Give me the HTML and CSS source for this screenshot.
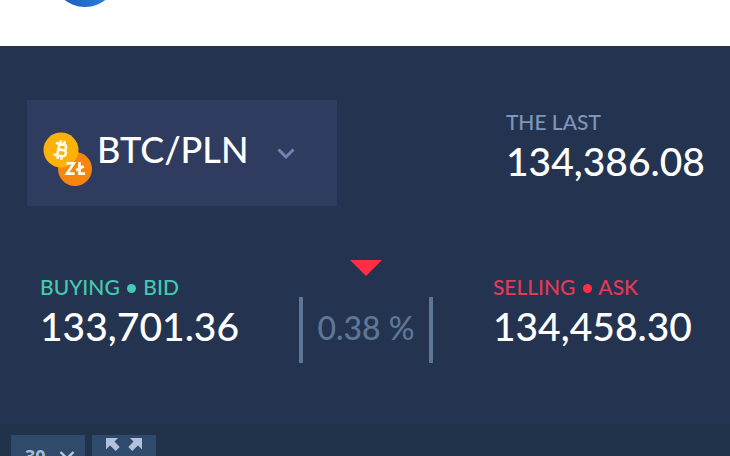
FILE: index.html
```
<!DOCTYPE html>
<html lang="en">

<head>
    <meta charset="utf-8">
    <meta name="viewport" content="width=device-width, initial-scale=1">
    <title>BTC/PLN</title>
    <link rel="stylesheet" href="styles.css">
</head>

<body>
    <header class="header">
        <div class="logo"></div>
    </header>
    <main class="ticker">
        <section class="row row-top">
            <div class="market">
                <svg class="coins" width="50" height="56" viewBox="0 0 50 56" aria-hidden="true">
                    <circle cx="32" cy="37" r="17" fill="#f98511"/>
                    <circle cx="18" cy="18" r="17.5" fill="#fcb10b"/>
                    <!-- bitcoin -->
                    <g transform="rotate(11 18 18)" fill="none" stroke="#fffbe6" stroke-width="2.6">
                        <path d="M11.500 12.200h8.200a2.800 2.800 0 0 1 0 5.600H15.500h5a3 3 0 0 1 0 6H11.500M15.300 12v12M16.200 8.500v3.500M20 8.500v3.500M16.200 24v3.500M20 24v3.500"/>
                    </g>
                    <!-- zloty -->
                    <g fill="none" stroke="#fffbe6" stroke-width="2.8">
                        <path d="M23.500 31.400h7.200L23.900 41.700h7.700M36.500 30v11.700h5.600M33.200 38.200l7.600-4"/>
                    </g>
                </svg>
                <select class="market-select" aria-label="Market">
                    <option>BTC/PLN</option>
                </select>
                <svg class="arrow" width="18" height="12" viewBox="0 0 18 12" aria-hidden="true">
                    <path d="M1.500 1.500L9 9l7.500-7.500" fill="none" stroke="#7384b4" stroke-width="3"/>
                </svg>
            </div>
            <div class="quote">
                <div class="label label-last">THE LAST</div>
                <div class="price">134,386.08</div>
            </div>
        </section>
        <section class="row row-bottom">
            <div class="quote">
                <div class="label label-bid">BUYING <span class="dot"></span> BID</div>
                <div class="price">133,701.36</div>
            </div>
            <div class="spread">
                <svg class="down" width="32" height="16" viewBox="0 0 32 16" aria-hidden="true">
                    <path d="M0 0h32L16 16z" fill="#ff2d46"/>
                </svg>
                <div class="spread-value">0.38 %</div>
            </div>
            <div class="quote">
                <div class="label label-ask">SELLING <span class="dot"></span> ASK</div>
                <div class="price">134,458.30</div>
            </div>
        </section>
    </main>
    <div class="toolbar">
        <div class="tool interval">
            <select class="interval-select" aria-label="Interval">
                <option>30</option>
            </select>
            <svg width="16" height="10" viewBox="0 0 16 10" aria-hidden="true">
                <path d="M1.500 1L8 7.500 14.500 1" fill="none" stroke="#b9cae2" stroke-width="2.400"/>
            </svg>
        </div>
        <button class="tool expand" type="button" aria-label="Full screen">
            <svg width="38" height="15" viewBox="0 0 38 15" aria-hidden="true">
                <g fill="#b3c2dc">
                    <path d="M1 1h12L9.500 4.500l5.200 5.600-3.900 3.900-5.800-5.400L1 12.500z"/>
                    <path d="M37 1H25l3.500 3.500-5.200 5.600 3.900 3.900 5.800-5.400L37 12.500z"/>
                </g>
            </svg>
        </button>
    </div>
</body>

</html>
```
FILE: styles.css
```
body {
    display: flex;
    flex-direction: column;
    height: 100vh;
    margin: 0;
    overflow: hidden;
    background-color: #24334f;
    color: #fff;
    font-family: Lato, "Liberation Sans", sans-serif;
    font-weight: 500;
}

.header {
    display: flex;
    flex: none;
    align-items: flex-end;
    box-sizing: border-box;
    height: 46px;
    padding: 0 52px 39px;
    overflow: hidden;
    background-color: #fff;
}

.logo {
    flex: none;
    width: 66px;
    height: 66px;
    border-radius: 50%;
    background: linear-gradient(90deg, #1a55b5, #2e86e0);
}

.ticker {
    flex: none;
    padding: 54px 0 61px;
}

.row {
    display: flex;
    justify-content: space-between;
}

.row-top {
    padding: 0 25px 0 27px;
    align-items: flex-start;
}

.row-bottom {
    padding: 54px 38px 0 40px;
}

.market {
    display: flex;
    align-items: center;
    box-sizing: border-box;
    min-width: 310px;
    height: 106px;
    padding: 0 42px 0 16px;
    background-color: #2f3c5f;
}

.coins {
    flex: none;
    margin-top: 14px;
}

.market-select {
    flex: 1;
    min-width: 0;
    margin: 0 0 8px 4px;
    padding: 0;
    border: 0;
    appearance: none;
    background: none;
    color: #fff;
    font: 500 36px/48px Lato, "Liberation Sans", sans-serif;
}

.arrow {
    flex: none;
    margin-top: 2px;
}

.label {
    font-size: 21px;
    line-height: 26px;
}

.row-top .quote {
    padding-top: 9px;
}

.row-bottom .quote {
    padding-top: 14px;
}

.label-last {
    color: #7c97b8;
}

.label-bid {
    color: #45c9b0;
}

.label-ask {
    color: #e23a58;
}

.dot {
    display: inline-block;
    width: 9px;
    height: 9px;
    margin: 0 2px;
    border-radius: 50%;
    background-color: currentColor;
    vertical-align: 2px;
}

.label-ask .dot {
    background-color: #ff2d46;
}

.price {
    font-size: 39px;
    line-height: 52px;
}

.spread {
    display: flex;
    flex-direction: column;
    align-items: center;
    gap: 21px;
}

.spread-value {
    padding: 0 14px 4px;
    border: solid #5d7896;
    border-width: 0 4px;
    color: #5d7896;
    font-size: 32px;
    line-height: 62px;
}

.toolbar {
    display: flex;
    flex: 1 0 40px;
    gap: 7px;
    padding: 11px 11px 0;
    background-color: #20334b;
}

.tool {
    display: flex;
    box-sizing: border-box;
    height: 42px;
    border: 0;
    background-color: #304a6c;
}

.interval {
    align-items: center;
    width: 74px;
    padding: 0 10px 0 14px;
}

.interval-select {
    flex: 1;
    min-width: 0;
    padding: 0;
    border: 0;
    appearance: none;
    background: none;
    color: #a5bcd2;
    font: bold 18px/24px "Open Sans", sans-serif;
}

.expand {
    justify-content: center;
    align-items: flex-start;
    width: 64px;
    padding: 2px 0 0;
}
```
